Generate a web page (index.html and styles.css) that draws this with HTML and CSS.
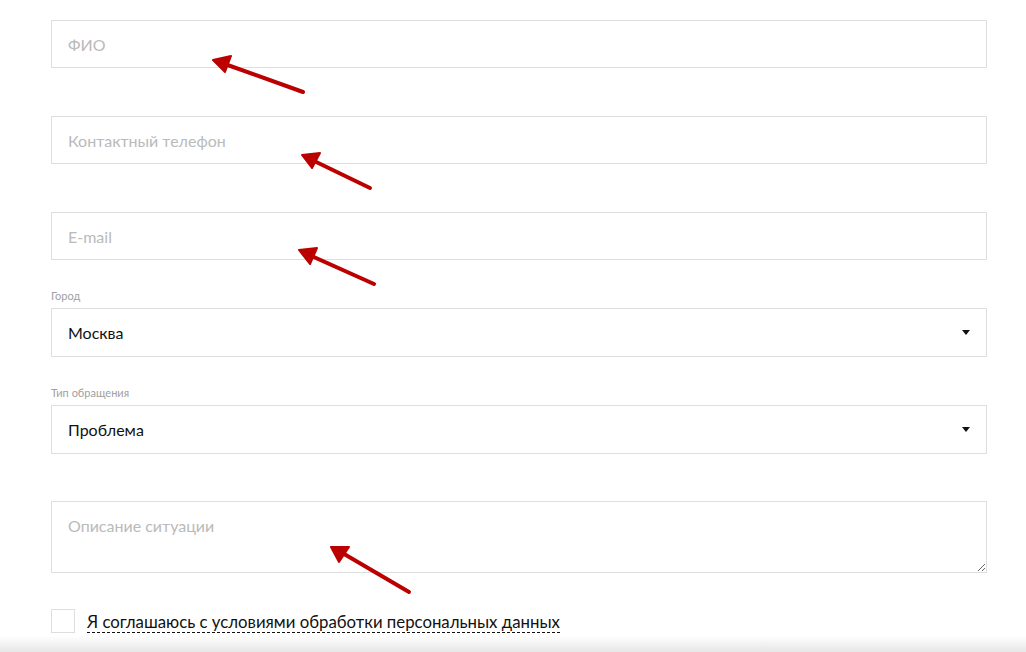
FILE: index.html
```html
<!DOCTYPE html>
<html>
    <head>
        <title>Обратная связь</title>
        <link rel="stylesheet" href="styles.css">
    </head>
  <body>
    <form class="feedback" action="">
        <div class="field">
            <input type="text" placeholder="ФИО">
        </div>
        <div class="field">
            <input type="text" placeholder="Контактный телефон">
        </div>
        <div class="field">
            <input type="text" placeholder="E-mail">
        </div>
        <div class="field labeled">
            <label>Город</label>
            <div class="select">
                <span>Москва</span>
                <i class="caret"></i>
            </div>
        </div>
        <div class="field labeled last-select">
            <label>Тип обращения</label>
            <div class="select">
                <span>Проблема</span>
                <i class="caret"></i>
            </div>
        </div>
        <div class="field comment">
            <textarea placeholder="Описание ситуации"></textarea>
        </div>
        <div class="agree">
            <span class="check"></span>
            <a class="agree-link">Я соглашаюсь с условиями обработки персональных данных</a>
        </div>
    </form>

    <!-- стрелки-пометки поверх формы -->
    <svg class="arrows" width="1026" height="652" viewBox="0 0 1026 652">
        <g fill="#bb0000" stroke="#bb0000" stroke-linecap="round" stroke-linejoin="round">
            <line x1="303" y1="92" x2="222" y2="63" stroke-width="4"/>
            <polygon points="213,60 231,56 225,72" stroke-width="2"/>
            <line x1="370" y1="188" x2="310" y2="159" stroke-width="4"/>
            <polygon points="302,155 320,153 312,168" stroke-width="2"/>
            <line x1="374" y1="284" x2="307" y2="254" stroke-width="4"/>
            <polygon points="299,250 317,248 310,264" stroke-width="2"/>
            <line x1="409" y1="592" x2="339" y2="551" stroke-width="4"/>
            <polygon points="331,547 349,547 339,562" stroke-width="2"/>
        </g>
    </svg>
    <div class="bottom-shade"></div>
  </body>
</html>
```

FILE: styles.css
```css
* {
    margin: 0;
    padding: 0;
    box-sizing: border-box;
}
html, body {
    height: 100%;
}
body {
    position: relative;
    overflow: hidden;
    background: #fff;
    font: 16px 'Lato', 'Noto Sans', sans-serif;
    color: #111;
}
.feedback {
    width: 936px;
    margin-left: 51px;
    padding-top: 20px;
}
.field {
    margin-bottom: 48px;
}
.field.labeled {
    margin-top: -18px;
}
.field.last-select {
    margin-bottom: 47px;
}
.field.comment {
    margin-bottom: 35px;
}
.field label {
    display: block;
    height: 18px;
    font-size: 11px;
    line-height: 12px;
    color: #a0a0a0;
}
input, textarea {
    display: block;
    width: 100%;
    height: 48px;
    padding: 0 16px;
    border: 1px solid #dedede;
    outline: 0;
    font: inherit;
    color: #111;
    background: #fff;
}
textarea {
    height: 72px;
    padding-top: 14px;
    resize: vertical;
}
input::placeholder, textarea::placeholder {
    color: #bababa;
}
.select {
    position: relative;
    display: flex;
    align-items: center;
    height: 49px;
    padding: 0 16px;
    border: 1px solid #dedede;
}
.caret {
    position: absolute;
    right: 16px;
    top: 21px;
    width: 0;
    height: 0;
    border-left: 4px solid transparent;
    border-right: 4px solid transparent;
    border-top: 5px solid #111;
}
.agree {
    display: flex;
    align-items: center;
    gap: 12px;
}
.check {
    width: 24px;
    height: 24px;
    border: 1px solid #dedede;
}
.agree-link {
    margin-top: 4px;
    font-size: 16.8px;
    color: #111;
    border-bottom: 1px dashed #111;
    line-height: 20px;
    cursor: pointer;
}
.arrows {
    position: absolute;
    left: 0;
    top: 0;
    pointer-events: none;
}
.bottom-shade {
    position: absolute;
    left: 0;
    bottom: 0;
    width: 100%;
    height: 16px;
    background: linear-gradient(#fff, #e6e6e6);
}
```
